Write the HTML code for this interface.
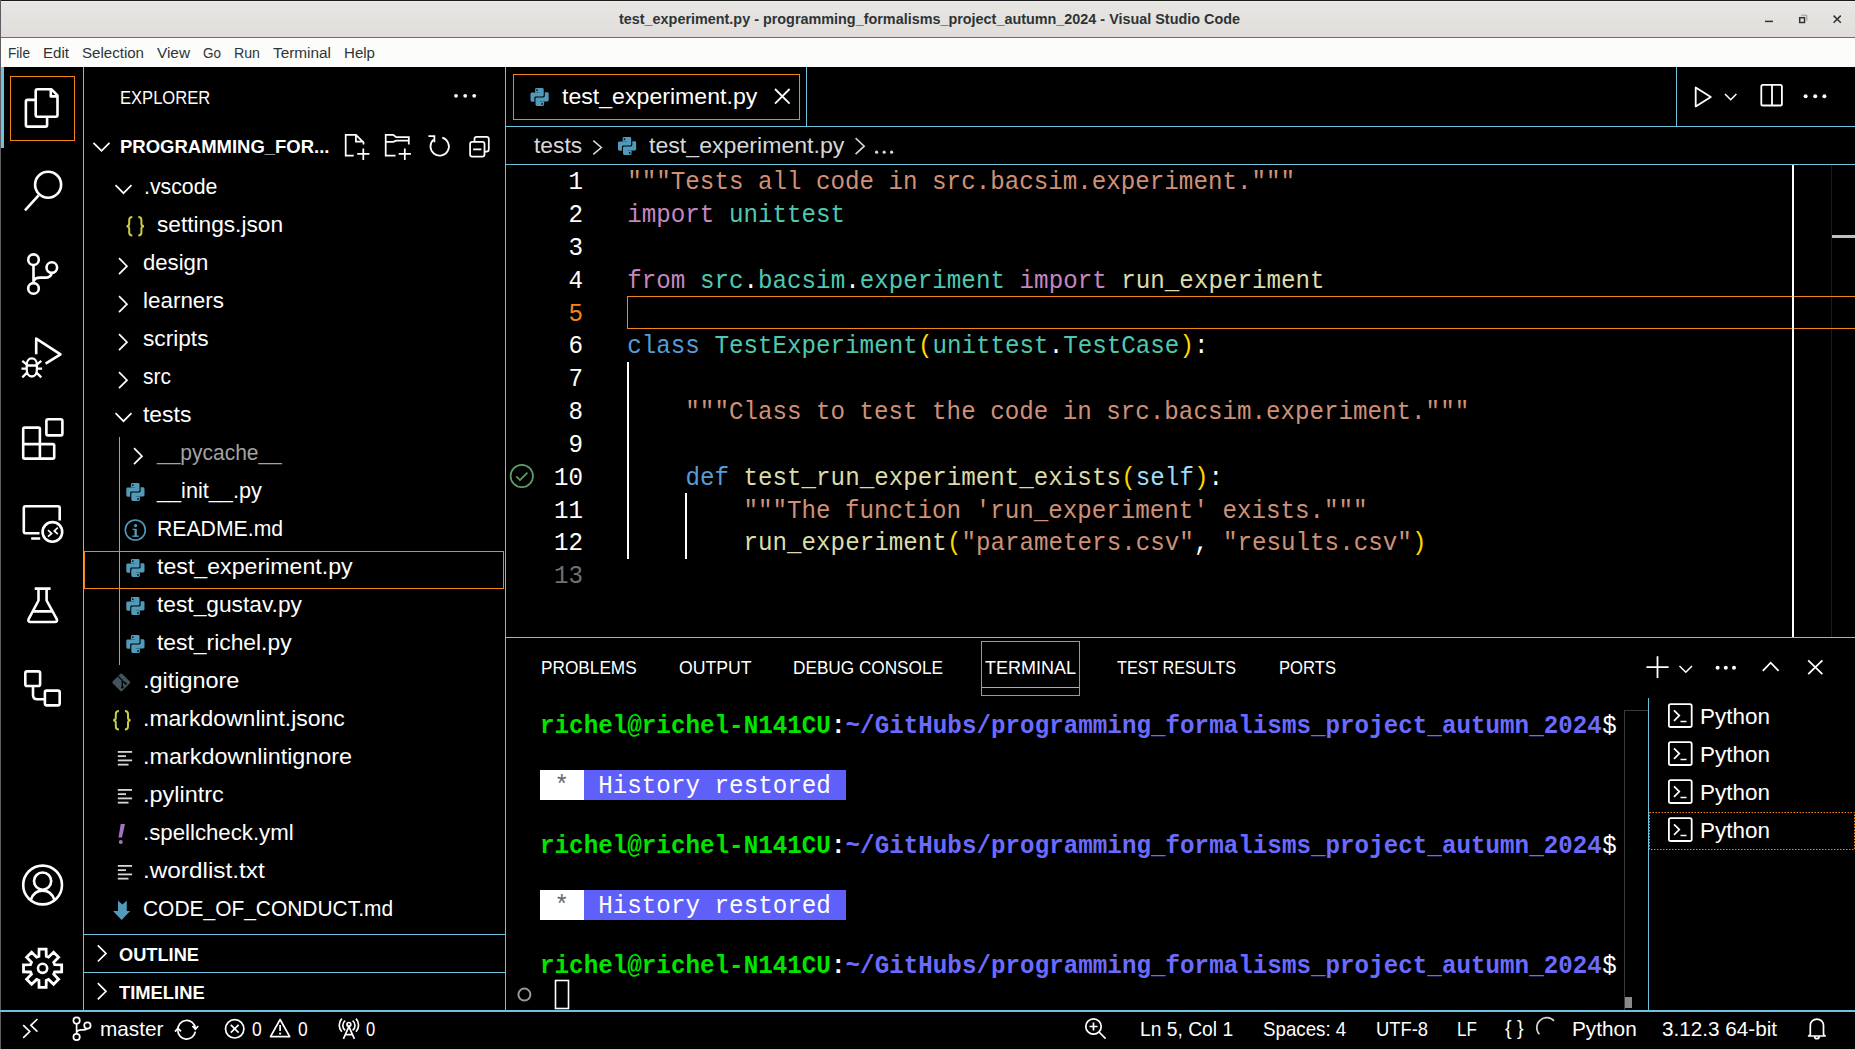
<!DOCTYPE html>
<html><head><meta charset="utf-8"><style>
html,body{margin:0;padding:0;background:#000;overflow:hidden}
#root{position:relative;width:1855px;height:1049px;overflow:hidden;background:#000}
.t{position:absolute;white-space:pre;font-family:"Liberation Sans",sans-serif;transform-origin:0 0}
.m{position:absolute;white-space:pre;font-family:"Liberation Mono",monospace;font-size:24.2px;line-height:24.2px;transform:scaleY(1.06);transform-origin:0 17.5px}
.tm{letter-spacing:0.03px}
svg{position:absolute;left:0;top:0}
</style></head><body><div id="root">
<svg width="1855" height="1049" viewBox="0 0 1855 1049">
<rect x="0" y="0" width="1855" height="1" fill="#1a1a1a"/>
<defs><linearGradient id="tg" x1="0" y1="0" x2="0" y2="1"><stop offset="0" stop-color="#e8e6e3"/><stop offset="1" stop-color="#e0ddda"/></linearGradient></defs>
<rect x="0" y="1" width="1855" height="36" fill="url(#tg)"/>
<rect x="1" y="1" width="1855" height="1" fill="#f0eeeb"/>
<rect x="0" y="37" width="1855" height="1" fill="#726960"/>
<rect x="0" y="38" width="1855" height="29" fill="#fcfcfb"/>
<rect x="0" y="0" width="1" height="1049" fill="#625c62"/>
<path d="M1765,21.4 H1773" stroke="#2e3436" stroke-width="1.5" fill="none"/>
<rect x="1799.7" y="17.7" width="4.8" height="4.8" stroke="#2e3436" stroke-width="1.5" fill="none"/>
<path d="M1801.2,15.2 H1806.8 V20.6" stroke="#8d8d8d" stroke-width="0.9" fill="none"/>
<path d="M1833.6,15.6 L1840.8,22.8 M1840.8,15.6 L1833.6,22.8" stroke="#2e3436" stroke-width="1.5" fill="none"/>
<rect x="1" y="67" width="3" height="81" fill="#6fc3df"/>
<rect x="10.5" y="76.5" width="64" height="64" fill="none" stroke="#f38518" stroke-width="1"/>
<rect x="83" y="67" width="1" height="943" fill="#6fc3df"/>
<path fill="none" stroke="#fff" stroke-width="2.6" stroke-linejoin="round" stroke-linecap="butt" d="M37.4,89.2 H51.3 L57.5,95.4 V115.1 Q57.5,116.8 55.8,116.8 H37.4 Q35.7,116.8 35.7,115.1 V90.9 Q35.7,89.2 37.4,89.2 Z M50.8,89.2 V96.4 H57.5"/>
<path fill="none" stroke="#fff" stroke-width="2.6" stroke-linejoin="round" stroke-linecap="butt" d="M35.7,99.9 H27.6 Q25.9,99.9 25.9,101.6 V124.9 Q25.9,126.6 27.6,126.6 H45.4 Q47.1,126.6 47.1,124.9 V116.8"/>
<circle fill="none" stroke="#fff" stroke-width="2.6" stroke-linejoin="round" stroke-linecap="butt" cx="48.1" cy="184.7" r="13"/>
<path fill="none" stroke="#fff" stroke-width="2.6" stroke-linejoin="round" stroke-linecap="butt" d="M25,210.3 L38.6,195.3"/>
<circle fill="none" stroke="#fff" stroke-width="2.6" stroke-linejoin="round" stroke-linecap="butt" cx="33.5" cy="259.7" r="5.3"/><circle fill="none" stroke="#fff" stroke-width="2.6" stroke-linejoin="round" stroke-linecap="butt" cx="51.8" cy="267.6" r="5.3"/><circle fill="none" stroke="#fff" stroke-width="2.6" stroke-linejoin="round" stroke-linecap="butt" cx="33.5" cy="288.4" r="5.3"/>
<path fill="none" stroke="#fff" stroke-width="2.6" stroke-linejoin="round" stroke-linecap="butt" d="M33.5,265 V283.1 M33.8,281 C34.5,278.5 37,277.6 40.5,277.6 H45 C48.8,277.6 51.2,275.8 51.8,272.9"/>
<path fill="none" stroke="#fff" stroke-width="2.6" stroke-linejoin="round" stroke-linecap="butt" d="M36.2,354.2 V338.6 L60.5,354.3 L45.6,363.6"/>
<path fill="none" stroke="#fff" stroke-width="2.3" d="M31.8,358.4 C35,358.4 36.9,361.5 36.9,365 V369.5 C36.9,373.8 34.6,376.5 31.8,376.5 C29,376.5 26.7,373.8 26.7,369.5 V365 C26.7,361.5 28.6,358.4 31.8,358.4 Z M26.7,365.5 H36.9 M21.5,368.6 H26.5 M37.1,368.6 H42.1 M22.3,360.8 L26.5,364.3 M41.3,360.8 L37.1,364.3 M22.3,377.3 L26.6,373.2 M41.3,377.3 L37,373.2"/>
<path fill="none" stroke="#fff" stroke-width="2.6" stroke-linejoin="round" stroke-linecap="butt" d="M23.2,429 Q23.2,427.6 24.6,427.6 H38.5 Q39.9,427.6 39.9,429 V444.1 H52.8 Q54.2,444.1 54.2,445.5 V457.2 Q54.2,458.6 52.8,458.6 H24.6 Q23.2,458.6 23.2,457.2 Z M23.2,444.1 H39.9 V458.6"/>
<rect fill="none" stroke="#fff" stroke-width="2.6" stroke-linejoin="round" stroke-linecap="butt" x="46.4" y="419.3" width="16" height="16.1" rx="1.6"/>
<path fill="none" stroke="#fff" stroke-width="2.6" stroke-linejoin="round" stroke-linecap="butt" d="M39.5,533.3 H25.5 Q23.8,533.3 23.8,531.6 V507.9 Q23.8,506.2 25.5,506.2 H58 Q59.7,506.2 59.7,507.9 V520.5 M31.2,538.5 H40.2"/>
<circle fill="none" stroke="#fff" stroke-width="2.6" stroke-linejoin="round" stroke-linecap="butt" cx="52.4" cy="531.9" r="9.8"/>
<path fill="none" stroke="#fff" stroke-width="1.7" d="M48,530.2 L51.6,533.4 L48,536.6 M57.8,527.7 L54.3,530.9 L57.8,534.1"/>
<path fill="none" stroke="#fff" stroke-width="2.6" stroke-linejoin="round" stroke-linecap="butt" d="M34.7,588.6 H50.6 M38.5,589 V600.5 L28.6,619.2 Q27.6,622 30.6,622 H54.8 Q57.8,622 56.8,619.2 L46.6,600.5 V589 M32.4,611.4 H52.8"/>
<rect fill="none" stroke="#fff" stroke-width="2.6" stroke-linejoin="round" stroke-linecap="butt" x="25.3" y="671.4" width="14.8" height="14.6" rx="1.8"/><rect fill="none" stroke="#fff" stroke-width="2.6" stroke-linejoin="round" stroke-linecap="butt" x="44.9" y="690.6" width="14.8" height="14.8" rx="1.8"/>
<path fill="none" stroke="#fff" stroke-width="2.6" stroke-linejoin="round" stroke-linecap="butt" d="M33,686.5 V695 Q33,699.3 37.3,699.3 H44.9"/>
<circle fill="none" stroke="#fff" stroke-width="2.6" stroke-linejoin="round" stroke-linecap="butt" cx="42.6" cy="885" r="19.4"/><circle fill="none" stroke="#fff" stroke-width="2.6" stroke-linejoin="round" stroke-linecap="butt" cx="42.6" cy="881.1" r="8.6"/>
<path fill="none" stroke="#fff" stroke-width="2.6" stroke-linejoin="round" stroke-linecap="butt" d="M30.9,899.6 C33,893.6 37.3,890.6 42.6,890.6 C47.9,890.6 52.2,893.6 54.3,899.6"/>
<path fill="none" stroke="#fff" stroke-width="2.8" stroke-linejoin="miter" d="M38.92,956.25 L39.06,949.22 L46.14,949.22 L46.28,956.25 L48.52,957.17 L53.59,952.31 L58.59,957.31 L53.73,962.38 L54.65,964.62 L61.68,964.76 L61.68,971.84 L54.65,971.98 L53.73,974.22 L58.59,979.29 L53.59,984.29 L48.52,979.43 L46.28,980.35 L46.14,987.38 L39.06,987.38 L38.92,980.35 L36.68,979.43 L31.61,984.29 L26.61,979.29 L31.47,974.22 L30.55,971.98 L23.52,971.84 L23.52,964.76 L30.55,964.62 L31.47,962.38 L26.61,957.31 L31.61,952.31 L36.68,957.17 Z"/>
<circle fill="none" stroke="#fff" stroke-width="2.6" stroke-linejoin="round" stroke-linecap="butt" cx="42.6" cy="968.3" r="4.6"/>
<rect x="505" y="67" width="1" height="943" fill="#6fc3df"/>
<circle cx="456" cy="95.8" r="1.9" fill="#fff"/>
<circle cx="465.2" cy="95.8" r="1.9" fill="#fff"/>
<circle cx="474.2" cy="95.8" r="1.9" fill="#fff"/>
<path fill="none" stroke="#fff" stroke-width="1.7" d="M93.5,142.8 L101.5,150.8 L109.5,142.8"/>
<path fill="none" stroke="#fff" stroke-width="1.75" stroke-linejoin="miter" d="M353.7,155.7 H345.7 V134.8 H355.9 L363.5,142.3 V144.5 M355.9,134.8 V141.6 H363.5 M363.3,148.4 V159.9 M357.2,153.9 H369.4"/>
<path fill="none" stroke="#fff" stroke-width="1.75" stroke-linejoin="miter" d="M395.5,155.7 H385.7 V134.8 H393.2 L396.2,137.2 H408.8 V144.5 M385.7,141.8 H393.2 L396.2,140.7 H408.8 M404.8,148.4 V159.9 M398.7,153.9 H410.9"/>
<path fill="none" stroke="#fff" stroke-width="1.75" stroke-linejoin="miter" d="M433.5,139.6 A9.2,9.2 0 1 0 442.3,137.6 M428.4,136.2 H434.4 V142.2"/>
<path fill="none" stroke="#fff" stroke-width="1.75" stroke-linejoin="miter" d="M474.5,141.2 V139 Q474.5,136.8 476.7,136.8 H486.6 Q488.8,136.8 488.8,139 V149.2 Q488.8,151.5 486.6,151.5 H484.7 M472.3,141.8 H482.3 Q484.5,141.8 484.5,144 V154.5 Q484.5,156.6 482.3,156.6 H472.3 Q470.1,156.6 470.1,154.5 V144 Q470.1,141.8 472.3,141.8 Z M473.2,149.4 H481.4"/>
<path fill="none" stroke="#fff" stroke-width="1.7" d="M115.5,185.2 L123.5,193.2 L131.5,185.2"/>
<path fill="none" stroke="#cbcb41" stroke-width="2" transform="translate(126,216.2)" d="M6.3,0.8 Q3.2,0.8 3.2,3.8 V7.6 Q3.2,9.9 0.6,10 Q3.2,10.1 3.2,12.4 V16.2 Q3.2,19.2 6.3,19.2 M12.3,0.8 Q15.4,0.8 15.4,3.8 V7.6 Q15.4,9.9 18,10 Q15.4,10.1 15.4,12.4 V16.2 Q15.4,19.2 12.3,19.2"/>
<path fill="none" stroke="#fff" stroke-width="1.7" d="M119,258.2 L127,266.2 L119,274.2"/>
<path fill="none" stroke="#fff" stroke-width="1.7" d="M119,296.2 L127,304.2 L119,312.2"/>
<path fill="none" stroke="#fff" stroke-width="1.7" d="M119,334.2 L127,342.2 L119,350.2"/>
<path fill="none" stroke="#fff" stroke-width="1.7" d="M119,372.2 L127,380.2 L119,388.2"/>
<path fill="none" stroke="#fff" stroke-width="1.7" d="M115.5,413.2 L123.5,421.2 L131.5,413.2"/>
<path fill="none" stroke="#fff" stroke-width="1.7" d="M134,448.2 L142,456.2 L134,464.2"/>
<g transform="translate(126.3,483.0) scale(1.0)" fill="#519aba"><path d="M4.6,1.4 Q4.6,0 6,0 H11.8 Q13.2,0 13.2,1.4 V7.2 Q13.2,8.6 11.8,8.6 H5.3 Q3.9,8.6 3.9,10 V13.7 H1.4 Q0,13.7 0,12.3 V6 Q0,4.6 1.4,4.6 H8.7 V4.2 H4.6 Z"/><path transform="rotate(180 9.1 9)" d="M4.6,1.4 Q4.6,0 6,0 H11.8 Q13.2,0 13.2,1.4 V7.2 Q13.2,8.6 11.8,8.6 H5.3 Q3.9,8.6 3.9,10 V13.7 H1.4 Q0,13.7 0,12.3 V6 Q0,4.6 1.4,4.6 H8.7 V4.2 H4.6 Z"/><circle cx="6.5" cy="2.1" r="0.85" fill="#000"/><circle cx="11.7" cy="15.9" r="0.85" fill="#000"/></g>
<circle cx="135.3" cy="530.0" r="10" fill="none" stroke="#519aba" stroke-width="1.6"/>
<g fill="#519aba"><circle cx="135.6" cy="525.6" r="1.6"/><rect x="134.5" y="528.8000000000001" width="2.3" height="7.6"/><rect x="132.6" y="528.8000000000001" width="2.5" height="1.2"/><rect x="132.4" y="535.5" width="6.3" height="1.4"/></g>
<g transform="translate(126.3,559.0) scale(1.0)" fill="#519aba"><path d="M4.6,1.4 Q4.6,0 6,0 H11.8 Q13.2,0 13.2,1.4 V7.2 Q13.2,8.6 11.8,8.6 H5.3 Q3.9,8.6 3.9,10 V13.7 H1.4 Q0,13.7 0,12.3 V6 Q0,4.6 1.4,4.6 H8.7 V4.2 H4.6 Z"/><path transform="rotate(180 9.1 9)" d="M4.6,1.4 Q4.6,0 6,0 H11.8 Q13.2,0 13.2,1.4 V7.2 Q13.2,8.6 11.8,8.6 H5.3 Q3.9,8.6 3.9,10 V13.7 H1.4 Q0,13.7 0,12.3 V6 Q0,4.6 1.4,4.6 H8.7 V4.2 H4.6 Z"/><circle cx="6.5" cy="2.1" r="0.85" fill="#000"/><circle cx="11.7" cy="15.9" r="0.85" fill="#000"/></g>
<g transform="translate(126.3,597.0) scale(1.0)" fill="#519aba"><path d="M4.6,1.4 Q4.6,0 6,0 H11.8 Q13.2,0 13.2,1.4 V7.2 Q13.2,8.6 11.8,8.6 H5.3 Q3.9,8.6 3.9,10 V13.7 H1.4 Q0,13.7 0,12.3 V6 Q0,4.6 1.4,4.6 H8.7 V4.2 H4.6 Z"/><path transform="rotate(180 9.1 9)" d="M4.6,1.4 Q4.6,0 6,0 H11.8 Q13.2,0 13.2,1.4 V7.2 Q13.2,8.6 11.8,8.6 H5.3 Q3.9,8.6 3.9,10 V13.7 H1.4 Q0,13.7 0,12.3 V6 Q0,4.6 1.4,4.6 H8.7 V4.2 H4.6 Z"/><circle cx="6.5" cy="2.1" r="0.85" fill="#000"/><circle cx="11.7" cy="15.9" r="0.85" fill="#000"/></g>
<g transform="translate(126.3,635.0) scale(1.0)" fill="#519aba"><path d="M4.6,1.4 Q4.6,0 6,0 H11.8 Q13.2,0 13.2,1.4 V7.2 Q13.2,8.6 11.8,8.6 H5.3 Q3.9,8.6 3.9,10 V13.7 H1.4 Q0,13.7 0,12.3 V6 Q0,4.6 1.4,4.6 H8.7 V4.2 H4.6 Z"/><path transform="rotate(180 9.1 9)" d="M4.6,1.4 Q4.6,0 6,0 H11.8 Q13.2,0 13.2,1.4 V7.2 Q13.2,8.6 11.8,8.6 H5.3 Q3.9,8.6 3.9,10 V13.7 H1.4 Q0,13.7 0,12.3 V6 Q0,4.6 1.4,4.6 H8.7 V4.2 H4.6 Z"/><circle cx="6.5" cy="2.1" r="0.85" fill="#000"/><circle cx="11.7" cy="15.9" r="0.85" fill="#000"/></g>
<g transform="translate(121.25,682.35) rotate(45)"><rect x="-6.7" y="-6.7" width="13.4" height="13.4" rx="1.5" fill="#41535b"/></g>
<path fill="none" stroke="#000" stroke-width="1.3" d="M118.3,676.4000000000001 L122.3,680.4000000000001 V687.2 M122.3,680.8000000000001 L125.6,683.6"/>
<circle cx="122.3" cy="687.2" r="1.2" fill="#000"/><circle cx="125.6" cy="683.6" r="1.2" fill="#000"/>
<path fill="none" stroke="#cbcb41" stroke-width="2" transform="translate(112.6,710.2)" d="M6.3,0.8 Q3.2,0.8 3.2,3.8 V7.6 Q3.2,9.9 0.6,10 Q3.2,10.1 3.2,12.4 V16.2 Q3.2,19.2 6.3,19.2 M12.3,0.8 Q15.4,0.8 15.4,3.8 V7.6 Q15.4,9.9 18,10 Q15.4,10.1 15.4,12.4 V16.2 Q15.4,19.2 12.3,19.2"/>
<rect x="117.8" y="751.0" width="14.3" height="1.8" fill="#d4d7d6"/>
<rect x="117.8" y="755.25" width="8.2" height="1.8" fill="#d4d7d6"/>
<rect x="117.8" y="759.5" width="14.3" height="1.8" fill="#d4d7d6"/>
<rect x="117.8" y="763.75" width="10.7" height="1.8" fill="#d4d7d6"/>
<rect x="117.8" y="789.0" width="14.3" height="1.8" fill="#d4d7d6"/>
<rect x="117.8" y="793.25" width="8.2" height="1.8" fill="#d4d7d6"/>
<rect x="117.8" y="797.5" width="14.3" height="1.8" fill="#d4d7d6"/>
<rect x="117.8" y="801.75" width="10.7" height="1.8" fill="#d4d7d6"/>
<path fill="#a074c4" d="M120.7,823.9000000000001 H125 L122,837.6 H118.5 Z"/><circle cx="120.8" cy="842.1" r="2" fill="#a074c4"/>
<rect x="117.8" y="865.0" width="14.3" height="1.8" fill="#d4d7d6"/>
<rect x="117.8" y="869.25" width="8.2" height="1.8" fill="#d4d7d6"/>
<rect x="117.8" y="873.5" width="14.3" height="1.8" fill="#d4d7d6"/>
<rect x="117.8" y="877.75" width="10.7" height="1.8" fill="#d4d7d6"/>
<path fill="#519aba" d="M118,900.6 L122.4,904.5 L126.8,900.6 V911.0 H130.2 L121.6,920.0 L113,911.0 H118 Z"/>
<rect x="119" y="437" width="1" height="228" fill="#a0a0a0"/>
<rect x="84.5" y="551.5" width="419" height="37" fill="none" stroke="#f38518" stroke-width="1"/>
<rect x="84" y="934" width="421" height="1" fill="#6fc3df"/>
<rect x="84" y="972" width="421" height="1" fill="#6fc3df"/>
<path fill="none" stroke="#fff" stroke-width="1.7" d="M97.8,945.3 L106,953.4 L97.8,961.5 M97.8,983.2 L106,991.3 L97.8,999.4"/>
<rect x="505" y="126" width="1350" height="1" fill="#6fc3df"/>
<rect x="806" y="67" width="1" height="59" fill="#6fc3df"/>
<rect x="1676" y="67" width="1" height="59" fill="#6fc3df"/>
<rect x="513.5" y="74.5" width="286" height="45" fill="none" stroke="#f38518" stroke-width="1"/>
<g transform="translate(530.5,88) scale(1.0)" fill="#519aba"><path d="M4.6,1.4 Q4.6,0 6,0 H11.8 Q13.2,0 13.2,1.4 V7.2 Q13.2,8.6 11.8,8.6 H5.3 Q3.9,8.6 3.9,10 V13.7 H1.4 Q0,13.7 0,12.3 V6 Q0,4.6 1.4,4.6 H8.7 V4.2 H4.6 Z"/><path transform="rotate(180 9.1 9)" d="M4.6,1.4 Q4.6,0 6,0 H11.8 Q13.2,0 13.2,1.4 V7.2 Q13.2,8.6 11.8,8.6 H5.3 Q3.9,8.6 3.9,10 V13.7 H1.4 Q0,13.7 0,12.3 V6 Q0,4.6 1.4,4.6 H8.7 V4.2 H4.6 Z"/><circle cx="6.5" cy="2.1" r="0.85" fill="#000"/><circle cx="11.7" cy="15.9" r="0.85" fill="#000"/></g>
<path fill="none" stroke="#fff" stroke-width="1.8" d="M775,89 L789.6,103.6 M789.6,89 L775,103.6"/>
<path fill="none" stroke="#fff" stroke-width="1.8" stroke-linejoin="round" d="M1695.7,87.4 V106.4 L1710.8,96.9 Z"/>
<path fill="none" stroke="#fff" stroke-width="1.5" d="M1725,94 L1730.7,99.8 L1736.4,94"/>
<rect x="1761.3" y="84.9" width="20.6" height="20.6" rx="1.6" fill="none" stroke="#fff" stroke-width="1.8"/><rect x="1771.1" y="85" width="1.8" height="20.5" fill="#fff"/>
<circle cx="1805.6" cy="96.2" r="2" fill="#fff"/>
<circle cx="1815.2" cy="96.2" r="2" fill="#fff"/>
<circle cx="1824.4" cy="96.2" r="2" fill="#fff"/>
<rect x="505" y="164" width="1350" height="1" fill="#6fc3df"/>
<path fill="none" stroke="#d7d7d7" stroke-width="1.6" d="M593.3,140.6 L601.3,147.5 L593.3,154.4"/>
<g transform="translate(618,137) scale(1.0)" fill="#519aba"><path d="M4.6,1.4 Q4.6,0 6,0 H11.8 Q13.2,0 13.2,1.4 V7.2 Q13.2,8.6 11.8,8.6 H5.3 Q3.9,8.6 3.9,10 V13.7 H1.4 Q0,13.7 0,12.3 V6 Q0,4.6 1.4,4.6 H8.7 V4.2 H4.6 Z"/><path transform="rotate(180 9.1 9)" d="M4.6,1.4 Q4.6,0 6,0 H11.8 Q13.2,0 13.2,1.4 V7.2 Q13.2,8.6 11.8,8.6 H5.3 Q3.9,8.6 3.9,10 V13.7 H1.4 Q0,13.7 0,12.3 V6 Q0,4.6 1.4,4.6 H8.7 V4.2 H4.6 Z"/><circle cx="6.5" cy="2.1" r="0.85" fill="#000"/><circle cx="11.7" cy="15.9" r="0.85" fill="#000"/></g>
<path fill="none" stroke="#d7d7d7" stroke-width="1.6" d="M855.6,138.2 L864.2,146.2 L855.6,154.2"/>
<circle cx="876.6" cy="152.2" r="1.6" fill="#d7d7d7"/>
<circle cx="884.2" cy="152.2" r="1.6" fill="#d7d7d7"/>
<circle cx="891.6" cy="152.2" r="1.6" fill="#d7d7d7"/>
<rect x="1792" y="165" width="2" height="472" fill="#ffffff"/>
<rect x="1831" y="165" width="1" height="472" fill="#1c1c1c"/>
<rect x="1832" y="235" width="23" height="3" fill="#c0c0c0"/>
<rect x="627.5" y="296.5" width="1240" height="32" fill="none" stroke="#f38518" stroke-width="1"/>
<rect x="1792" y="290" width="2" height="45" fill="#ffffff"/>
<rect x="627" y="362" width="2" height="197" fill="#ffffff"/>
<rect x="685" y="493" width="2" height="66" fill="#ffffff"/>
<circle cx="521.8" cy="476" r="11.2" fill="none" stroke="#5f9c6b" stroke-width="1.7"/><path fill="none" stroke="#5f9c6b" stroke-width="1.7" d="M516.3,476.3 L520,480 L527.4,472.6"/>
<rect x="505" y="637" width="1350" height="1" fill="#6fc3df"/>
<rect x="981.5" y="641.5" width="98" height="54" fill="none" stroke="#f38518" stroke-width="1"/>
<rect x="982" y="687" width="97" height="1" fill="#6fc3df"/>
<path fill="none" stroke="#fff" stroke-width="1.8" d="M1657.5,656.3 V678 M1646.4,667.2 H1668.6"/>
<path fill="none" stroke="#fff" stroke-width="1.5" d="M1679.5,666 L1685.8,672.3 L1692,666"/>
<circle cx="1717.6" cy="667.8" r="2" fill="#fff"/>
<circle cx="1725.8" cy="667.8" r="2" fill="#fff"/>
<circle cx="1734" cy="667.8" r="2" fill="#fff"/>
<path fill="none" stroke="#fff" stroke-width="1.8" d="M1762.8,670.8 L1770.7,662.7 L1778.6,670.8"/>
<path fill="none" stroke="#fff" stroke-width="1.8" d="M1808.2,660.3 L1822.4,674.2 M1822.4,660.3 L1808.2,674.2"/>
<rect x="1648" y="698" width="1" height="312" fill="#6fc3df"/>
<rect x="1624" y="710" width="1" height="300" fill="#3a3a3a"/><rect x="1624" y="710" width="24" height="1" fill="#3a3a3a"/>
<rect x="1625" y="997" width="7" height="11" fill="#8a8a8a"/>
<rect x="1668.9" y="704.1999999999999" width="22.8" height="22.8" rx="1.8" fill="none" stroke="#fff" stroke-width="1.8"/>
<path fill="none" stroke="#fff" stroke-width="1.7" d="M1674,710.3 L1679.3,715.5999999999999 L1674,720.9 M1680.5,721.5 H1686.5"/>
<rect x="1668.9" y="742.1999999999999" width="22.8" height="22.8" rx="1.8" fill="none" stroke="#fff" stroke-width="1.8"/>
<path fill="none" stroke="#fff" stroke-width="1.7" d="M1674,748.3 L1679.3,753.5999999999999 L1674,758.9 M1680.5,759.5 H1686.5"/>
<rect x="1668.9" y="780.1999999999999" width="22.8" height="22.8" rx="1.8" fill="none" stroke="#fff" stroke-width="1.8"/>
<path fill="none" stroke="#fff" stroke-width="1.7" d="M1674,786.3 L1679.3,791.5999999999999 L1674,796.9 M1680.5,797.5 H1686.5"/>
<rect x="1668.9" y="818.1999999999999" width="22.8" height="22.8" rx="1.8" fill="none" stroke="#fff" stroke-width="1.8"/>
<path fill="none" stroke="#fff" stroke-width="1.7" d="M1674,824.3 L1679.3,829.5999999999999 L1674,834.9 M1680.5,835.5 H1686.5"/>
<rect x="1649.5" y="812.5" width="205" height="37" fill="none" stroke="#f38518" stroke-width="1" stroke-dasharray="1.5 1.5"/>
<rect x="540" y="770" width="44" height="30" fill="#ffffff"/>
<rect x="584" y="770" width="262" height="30" fill="#5f5ffa"/>
<rect x="540" y="890" width="44" height="30" fill="#ffffff"/>
<rect x="584" y="890" width="262" height="30" fill="#5f5ffa"/>
<rect x="555.5" y="980.5" width="13" height="28" fill="none" stroke="#fff" stroke-width="1.6"/>
<circle cx="524.4" cy="994.6" r="6" fill="none" stroke="#9a9a9a" stroke-width="2"/>
<rect x="0" y="1010" width="1855" height="2" fill="#6fc3df"/>
<path fill="none" stroke="#fff" stroke-width="1.7" d="M23.2,1025.2 L29.7,1031.5 L23.2,1037.8 M37.4,1019 L30.9,1025.3 L37.4,1031.6"/>
<circle fill="none" stroke="#fff" stroke-width="1.7" cx="76.6" cy="1020.6" r="3.2"/><circle fill="none" stroke="#fff" stroke-width="1.7" cx="87.4" cy="1025.5" r="3.2"/><circle fill="none" stroke="#fff" stroke-width="1.7" cx="76.6" cy="1037" r="3.2"/>
<path fill="none" stroke="#fff" stroke-width="1.7" d="M76.6,1023.8 V1033.8 M76.8,1032 C77.5,1030.5 78.8,1029.8 80.5,1029.8 H83 C85.5,1029.8 87.2,1028.8 87.4,1028.7"/>
<path fill="none" stroke="#fff" stroke-width="1.7" d="M177.9,1030.2 A8.8,8.8 0 0 1 195.4,1028.3 M195.3,1031.6 A8.8,8.8 0 0 1 177.8,1030.4 M175,1031.6 L177.9,1028.3 L181,1031.4 M192.4,1026 L195.4,1029.3 L198.2,1026"/>
<circle fill="none" stroke="#fff" stroke-width="1.7" cx="234.7" cy="1028.8" r="9.2"/><path fill="none" stroke="#fff" stroke-width="1.7" d="M230.8,1024.9 L238.6,1032.7 M238.6,1024.9 L230.8,1032.7"/>
<path fill="none" stroke="#fff" stroke-width="1.7" stroke-linejoin="round" d="M280.1,1019.5 L270.5,1036.6 H289.7 Z"/><path fill="none" stroke="#fff" stroke-width="1.7" d="M280.1,1025 V1031"/><circle cx="280.1" cy="1033.6" r="1.1" fill="#fff"/>
<path fill="none" stroke="#fff" stroke-width="1.7" d="M343.4,1038.8 L348.9,1026.6 L354.4,1038.8 M345.3,1034.6 H352.5 M345.2,1020.6 A6.2,6.2 0 0 0 345.2,1030.4 M352.6,1020.6 A6.2,6.2 0 0 1 352.6,1030.4 M341.8,1018.6 A9.8,9.8 0 0 0 341.8,1031.8 M356,1018.6 A9.8,9.8 0 0 1 356,1031.8"/><circle fill="none" stroke="#fff" stroke-width="1.7" cx="348.9" cy="1024.4" r="1.9"/>
<circle fill="none" stroke="#fff" stroke-width="1.7" cx="1093.5" cy="1026.5" r="7.7"/><path fill="none" stroke="#fff" stroke-width="1.7" d="M1099,1032 L1105.6,1038.6 M1093.5,1022.5 V1030.5 M1089.5,1026.5 H1097.5"/>
<path fill="none" stroke="#d0d0d0" stroke-width="1.7" d="M1539.4,1034.3 A9,9 0 0 1 1554,1020.9"/>
<path fill="none" stroke="#fff" stroke-width="1.7" stroke-linejoin="round" d="M1810.3,1034.4 V1025.6 A6.6,6.6 0 0 1 1823.5,1025.6 V1034.4 L1825.2,1036 H1808.6 Z M1814.6,1036.4 A2.3,2.3 0 0 0 1819.2,1036.4"/>
</svg>
<div class="t" style="left:618.50px;top:12.24px;font-size:14.6px;line-height:14.6px;color:#2e3436;font-weight:bold;transform:scaleX(0.9859);">test_experiment.py - programming_formalisms_project_autumn_2024 - Visual Studio Code</div>
<div class="t" style="left:8.00px;top:46.05px;font-size:14px;line-height:14px;color:#2e3436;font-weight:normal;transform:scaleX(0.9751);">File</div>
<div class="t" style="left:43.00px;top:46.05px;font-size:14px;line-height:14px;color:#2e3436;font-weight:normal;transform:scaleX(1.0777);">Edit</div>
<div class="t" style="left:82.00px;top:46.05px;font-size:14px;line-height:14px;color:#2e3436;font-weight:normal;transform:scaleX(1.0765);">Selection</div>
<div class="t" style="left:157.00px;top:46.05px;font-size:14px;line-height:14px;color:#2e3436;font-weight:normal;transform:scaleX(1.0966);">View</div>
<div class="t" style="left:203.00px;top:46.05px;font-size:14px;line-height:14px;color:#2e3436;font-weight:normal;transform:scaleX(0.9632);">Go</div>
<div class="t" style="left:234.00px;top:46.05px;font-size:14px;line-height:14px;color:#2e3436;font-weight:normal;transform:scaleX(1.0122);">Run</div>
<div class="t" style="left:273.00px;top:46.05px;font-size:14px;line-height:14px;color:#2e3436;font-weight:normal;transform:scaleX(1.0963);">Terminal</div>
<div class="t" style="left:344.00px;top:46.05px;font-size:14px;line-height:14px;color:#2e3436;font-weight:normal;transform:scaleX(1.0765);">Help</div>
<div class="t" style="left:119.80px;top:87.71px;font-size:19px;line-height:19px;color:#ffffff;font-weight:normal;transform:scaleX(0.8716);">EXPLORER</div>
<div class="t" style="left:119.50px;top:136.81px;font-size:19px;line-height:19px;color:#ffffff;font-weight:bold;transform:scaleX(0.9729);">PROGRAMMING_FOR...</div>
<div class="t" style="left:143.80px;top:176.18px;font-size:22.46px;line-height:22.46px;color:#fff;font-weight:normal;transform:scaleX(0.9484);">.vscode</div>
<div class="t" style="left:157.30px;top:214.18px;font-size:22.46px;line-height:22.46px;color:#fff;font-weight:normal;transform:scaleX(1.0095);">settings.json</div>
<div class="t" style="left:143.30px;top:252.18px;font-size:22.46px;line-height:22.46px;color:#fff;font-weight:normal;transform:scaleX(0.9853);">design</div>
<div class="t" style="left:143.30px;top:290.18px;font-size:22.46px;line-height:22.46px;color:#fff;font-weight:normal;transform:scaleX(0.9985);">learners</div>
<div class="t" style="left:143.30px;top:328.18px;font-size:22.46px;line-height:22.46px;color:#fff;font-weight:normal;transform:scaleX(1.0096);">scripts</div>
<div class="t" style="left:143.30px;top:366.18px;font-size:22.46px;line-height:22.46px;color:#fff;font-weight:normal;transform:scaleX(0.9319);">src</div>
<div class="t" style="left:143.30px;top:404.18px;font-size:22.46px;line-height:22.46px;color:#fff;font-weight:normal;transform:scaleX(1.0206);">tests</div>
<div class="t" style="left:157.30px;top:442.18px;font-size:22.46px;line-height:22.46px;color:#a3a3a3;font-weight:normal;transform:scaleX(0.9342);">__pycache__</div>
<div class="t" style="left:157.30px;top:480.18px;font-size:22.46px;line-height:22.46px;color:#fff;font-weight:normal;transform:scaleX(0.9649);">__init__.py</div>
<div class="t" style="left:157.30px;top:518.18px;font-size:22.46px;line-height:22.46px;color:#fff;font-weight:normal;transform:scaleX(0.9446);">README.md</div>
<div class="t" style="left:157.30px;top:556.18px;font-size:22.46px;line-height:22.46px;color:#fff;font-weight:normal;transform:scaleX(1.0311);">test_experiment.py</div>
<div class="t" style="left:157.30px;top:594.18px;font-size:22.46px;line-height:22.46px;color:#fff;font-weight:normal;transform:scaleX(1.0124);">test_gustav.py</div>
<div class="t" style="left:157.30px;top:632.18px;font-size:22.46px;line-height:22.46px;color:#fff;font-weight:normal;transform:scaleX(1.0174);">test_richel.py</div>
<div class="t" style="left:143.40px;top:670.18px;font-size:22.46px;line-height:22.46px;color:#fff;font-weight:normal;transform:scaleX(1.0436);">.gitignore</div>
<div class="t" style="left:143.40px;top:708.18px;font-size:22.46px;line-height:22.46px;color:#fff;font-weight:normal;transform:scaleX(1.0235);">.markdownlint.jsonc</div>
<div class="t" style="left:143.40px;top:746.18px;font-size:22.46px;line-height:22.46px;color:#fff;font-weight:normal;transform:scaleX(1.0406);">.markdownlintignore</div>
<div class="t" style="left:143.40px;top:784.18px;font-size:22.46px;line-height:22.46px;color:#fff;font-weight:normal;transform:scaleX(1.0432);">.pylintrc</div>
<div class="t" style="left:143.40px;top:822.18px;font-size:22.46px;line-height:22.46px;color:#fff;font-weight:normal;transform:scaleX(0.9899);">.spellcheck.yml</div>
<div class="t" style="left:143.40px;top:860.18px;font-size:22.46px;line-height:22.46px;color:#fff;font-weight:normal;transform:scaleX(1.0837);">.wordlist.txt</div>
<div class="t" style="left:143.40px;top:898.18px;font-size:22.46px;line-height:22.46px;color:#fff;font-weight:normal;transform:scaleX(0.9324);">CODE_OF_CONDUCT.md</div>
<div class="t" style="left:119.00px;top:945.11px;font-size:19px;line-height:19px;color:#fff;font-weight:bold;transform:scaleX(0.9593);">OUTLINE</div>
<div class="t" style="left:119.00px;top:982.51px;font-size:19px;line-height:19px;color:#fff;font-weight:bold;transform:scaleX(0.9665);">TIMELINE</div>
<div class="t" style="left:561.70px;top:85.78px;font-size:22.46px;line-height:22.46px;color:#fff;font-weight:normal;transform:scaleX(1.0295);">test_experiment.py</div>
<div class="t" style="left:534.20px;top:134.58px;font-size:22.46px;line-height:22.46px;color:#d7d7d7;font-weight:normal;transform:scaleX(1.0143);">tests</div>
<div class="t" style="left:649.40px;top:134.58px;font-size:22.46px;line-height:22.46px;color:#d7d7d7;font-weight:normal;transform:scaleX(1.0300);">test_experiment.py</div>
<div class="t" style="left:540.90px;top:658.01px;font-size:19px;line-height:19px;color:#fff;font-weight:normal;transform:scaleX(0.9063);">PROBLEMS</div>
<div class="t" style="left:678.80px;top:658.01px;font-size:19px;line-height:19px;color:#fff;font-weight:normal;transform:scaleX(0.9282);">OUTPUT</div>
<div class="t" style="left:793.00px;top:658.01px;font-size:19px;line-height:19px;color:#fff;font-weight:normal;transform:scaleX(0.9049);">DEBUG CONSOLE</div>
<div class="t" style="left:985.00px;top:658.01px;font-size:19px;line-height:19px;color:#fff;font-weight:normal;transform:scaleX(0.9471);">TERMINAL</div>
<div class="t" style="left:1117.00px;top:658.01px;font-size:19px;line-height:19px;color:#fff;font-weight:normal;transform:scaleX(0.8517);">TEST RESULTS</div>
<div class="t" style="left:1279.00px;top:658.01px;font-size:19px;line-height:19px;color:#fff;font-weight:normal;transform:scaleX(0.8754);">PORTS</div>
<div class="t" style="left:1700.00px;top:705.78px;font-size:22.46px;line-height:22.46px;color:#fff;font-weight:normal;transform:scaleX(0.9999);">Python</div>
<div class="t" style="left:1700.00px;top:743.78px;font-size:22.46px;line-height:22.46px;color:#fff;font-weight:normal;transform:scaleX(0.9999);">Python</div>
<div class="t" style="left:1700.00px;top:781.78px;font-size:22.46px;line-height:22.46px;color:#fff;font-weight:normal;transform:scaleX(0.9999);">Python</div>
<div class="t" style="left:1700.00px;top:819.78px;font-size:22.46px;line-height:22.46px;color:#fff;font-weight:normal;transform:scaleX(0.9999);">Python</div>
<div class="t" style="left:100.10px;top:1019.07px;font-size:20.7px;line-height:20.7px;color:#fff;font-weight:normal;transform:scaleX(1.0042);">master</div>
<div class="t" style="left:252.30px;top:1019.07px;font-size:20.7px;line-height:20.7px;color:#fff;font-weight:normal;transform:scaleX(0.8423);">0</div>
<div class="t" style="left:297.90px;top:1019.07px;font-size:20.7px;line-height:20.7px;color:#fff;font-weight:normal;transform:scaleX(0.8423);">0</div>
<div class="t" style="left:366.30px;top:1019.07px;font-size:20.7px;line-height:20.7px;color:#fff;font-weight:normal;transform:scaleX(0.7989);">0</div>
<div class="t" style="left:1139.80px;top:1019.07px;font-size:20.7px;line-height:20.7px;color:#fff;font-weight:normal;transform:scaleX(0.9304);">Ln 5, Col 1</div>
<div class="t" style="left:1262.60px;top:1019.07px;font-size:20.7px;line-height:20.7px;color:#fff;font-weight:normal;transform:scaleX(0.9053);">Spaces: 4</div>
<div class="t" style="left:1375.50px;top:1019.07px;font-size:20.7px;line-height:20.7px;color:#fff;font-weight:normal;transform:scaleX(0.8889);">UTF-8</div>
<div class="t" style="left:1457.20px;top:1019.07px;font-size:20.7px;line-height:20.7px;color:#fff;font-weight:normal;transform:scaleX(0.8238);">LF</div>
<div class="t" style="left:1571.50px;top:1019.07px;font-size:20.7px;line-height:20.7px;color:#fff;font-weight:normal;transform:scaleX(1.0046);">Python</div>
<div class="t" style="left:1661.60px;top:1019.07px;font-size:20.7px;line-height:20.7px;color:#fff;font-weight:normal;transform:scaleX(1.0007);">3.12.3 64-bit</div>
<div class="t" style="left:1505.00px;top:1017.87px;font-size:20.7px;line-height:20.7px;color:#fff;font-weight:normal;transform:scaleX(0.9551);">{ }</div>
<div class="m" style="left:568.47px;top:171.26px;color:#ffffff">1</div>
<div class="m" style="left:627.30px;top:171.26px;color:#ce9178">"""Tests all code in src.bacsim.experiment."""</div>
<div class="m" style="left:568.47px;top:204.09px;color:#ffffff">2</div>
<div class="m" style="left:627.30px;top:204.09px;color:#c586c0">import</div>
<div class="m" style="left:714.48px;top:204.09px;color:#fff"> </div>
<div class="m" style="left:729.01px;top:204.09px;color:#4ec9b0">unittest</div>
<div class="m" style="left:568.47px;top:236.92px;color:#ffffff">3</div>
<div class="m" style="left:568.47px;top:269.75px;color:#ffffff">4</div>
<div class="m" style="left:627.30px;top:269.75px;color:#c586c0">from</div>
<div class="m" style="left:685.42px;top:269.75px;color:#fff"> </div>
<div class="m" style="left:699.95px;top:269.75px;color:#4ec9b0">src</div>
<div class="m" style="left:743.54px;top:269.75px;color:#fff">.</div>
<div class="m" style="left:758.07px;top:269.75px;color:#4ec9b0">bacsim</div>
<div class="m" style="left:845.25px;top:269.75px;color:#fff">.</div>
<div class="m" style="left:859.78px;top:269.75px;color:#4ec9b0">experiment</div>
<div class="m" style="left:1005.08px;top:269.75px;color:#fff"> </div>
<div class="m" style="left:1019.61px;top:269.75px;color:#c586c0">import</div>
<div class="m" style="left:1106.79px;top:269.75px;color:#fff"> </div>
<div class="m" style="left:1121.32px;top:269.75px;color:#dcdcaa">run_experiment</div>
<div class="m" style="left:568.47px;top:302.58px;color:#f38518">5</div>
<div class="m" style="left:568.47px;top:335.41px;color:#ffffff">6</div>
<div class="m" style="left:627.30px;top:335.41px;color:#569cd6">class</div>
<div class="m" style="left:699.95px;top:335.41px;color:#fff"> </div>
<div class="m" style="left:714.48px;top:335.41px;color:#4ec9b0">TestExperiment</div>
<div class="m" style="left:917.90px;top:335.41px;color:#ffd700">(</div>
<div class="m" style="left:932.43px;top:335.41px;color:#4ec9b0">unittest</div>
<div class="m" style="left:1048.67px;top:335.41px;color:#fff">.</div>
<div class="m" style="left:1063.20px;top:335.41px;color:#4ec9b0">TestCase</div>
<div class="m" style="left:1179.44px;top:335.41px;color:#ffd700">)</div>
<div class="m" style="left:1193.97px;top:335.41px;color:#fff">:</div>
<div class="m" style="left:568.47px;top:368.24px;color:#ffffff">7</div>
<div class="m" style="left:568.47px;top:401.07px;color:#ffffff">8</div>
<div class="m" style="left:627.30px;top:401.07px;color:#ce9178">    """Class to test the code in src.bacsim.experiment."""</div>
<div class="m" style="left:568.47px;top:433.90px;color:#ffffff">9</div>
<div class="m" style="left:553.94px;top:466.73px;color:#ffffff">10</div>
<div class="m" style="left:627.30px;top:466.73px;color:#fff">    </div>
<div class="m" style="left:685.42px;top:466.73px;color:#569cd6">def</div>
<div class="m" style="left:729.01px;top:466.73px;color:#fff"> </div>
<div class="m" style="left:743.54px;top:466.73px;color:#dcdcaa">test_run_experiment_exists</div>
<div class="m" style="left:1121.32px;top:466.73px;color:#ffd700">(</div>
<div class="m" style="left:1135.85px;top:466.73px;color:#9cdcfe">self</div>
<div class="m" style="left:1193.97px;top:466.73px;color:#ffd700">)</div>
<div class="m" style="left:1208.50px;top:466.73px;color:#fff">:</div>
<div class="m" style="left:553.94px;top:499.56px;color:#ffffff">11</div>
<div class="m" style="left:627.30px;top:499.56px;color:#ce9178">        """The function 'run_experiment' exists."""</div>
<div class="m" style="left:553.94px;top:532.39px;color:#ffffff">12</div>
<div class="m" style="left:627.30px;top:532.39px;color:#fff">        </div>
<div class="m" style="left:743.54px;top:532.39px;color:#dcdcaa">run_experiment</div>
<div class="m" style="left:946.96px;top:532.39px;color:#ffd700">(</div>
<div class="m" style="left:961.49px;top:532.39px;color:#ce9178">"parameters.csv"</div>
<div class="m" style="left:1193.97px;top:532.39px;color:#fff">, </div>
<div class="m" style="left:1223.03px;top:532.39px;color:#ce9178">"results.csv"</div>
<div class="m" style="left:1411.92px;top:532.39px;color:#ffd700">)</div>
<div class="m" style="left:553.94px;top:565.22px;color:#707070">13</div>
<div class="m tm" style="left:540.00px;top:714.96px;color:#00e400;font-weight:bold">richel@richel-N141CU</div>
<div class="m tm" style="left:831.00px;top:714.96px;color:#ffffff;font-weight:bold">:</div>
<div class="m tm" style="left:845.55px;top:714.96px;color:#6b6bff;font-weight:bold">~/GitHubs/programming_formalisms_project_autumn_2024</div>
<div class="m tm" style="left:1602.15px;top:714.96px;color:#ffffff;font-weight:normal">$</div>
<div class="m tm" style="left:540.00px;top:834.96px;color:#00e400;font-weight:bold">richel@richel-N141CU</div>
<div class="m tm" style="left:831.00px;top:834.96px;color:#ffffff;font-weight:bold">:</div>
<div class="m tm" style="left:845.55px;top:834.96px;color:#6b6bff;font-weight:bold">~/GitHubs/programming_formalisms_project_autumn_2024</div>
<div class="m tm" style="left:1602.15px;top:834.96px;color:#ffffff;font-weight:normal">$</div>
<div class="m tm" style="left:540.00px;top:954.96px;color:#00e400;font-weight:bold">richel@richel-N141CU</div>
<div class="m tm" style="left:831.00px;top:954.96px;color:#ffffff;font-weight:bold">:</div>
<div class="m tm" style="left:845.55px;top:954.96px;color:#6b6bff;font-weight:bold">~/GitHubs/programming_formalisms_project_autumn_2024</div>
<div class="m tm" style="left:1602.15px;top:954.96px;color:#ffffff;font-weight:normal">$</div>
<div class="m tm" style="left:540.00px;top:774.96px;color:#666666;font-weight:normal"> * </div>
<div class="m tm" style="left:583.65px;top:774.96px;color:#ffffff;font-weight:normal"> History restored </div>
<div class="m tm" style="left:540.00px;top:894.96px;color:#666666;font-weight:normal"> * </div>
<div class="m tm" style="left:583.65px;top:894.96px;color:#ffffff;font-weight:normal"> History restored </div>
</div></body></html>
